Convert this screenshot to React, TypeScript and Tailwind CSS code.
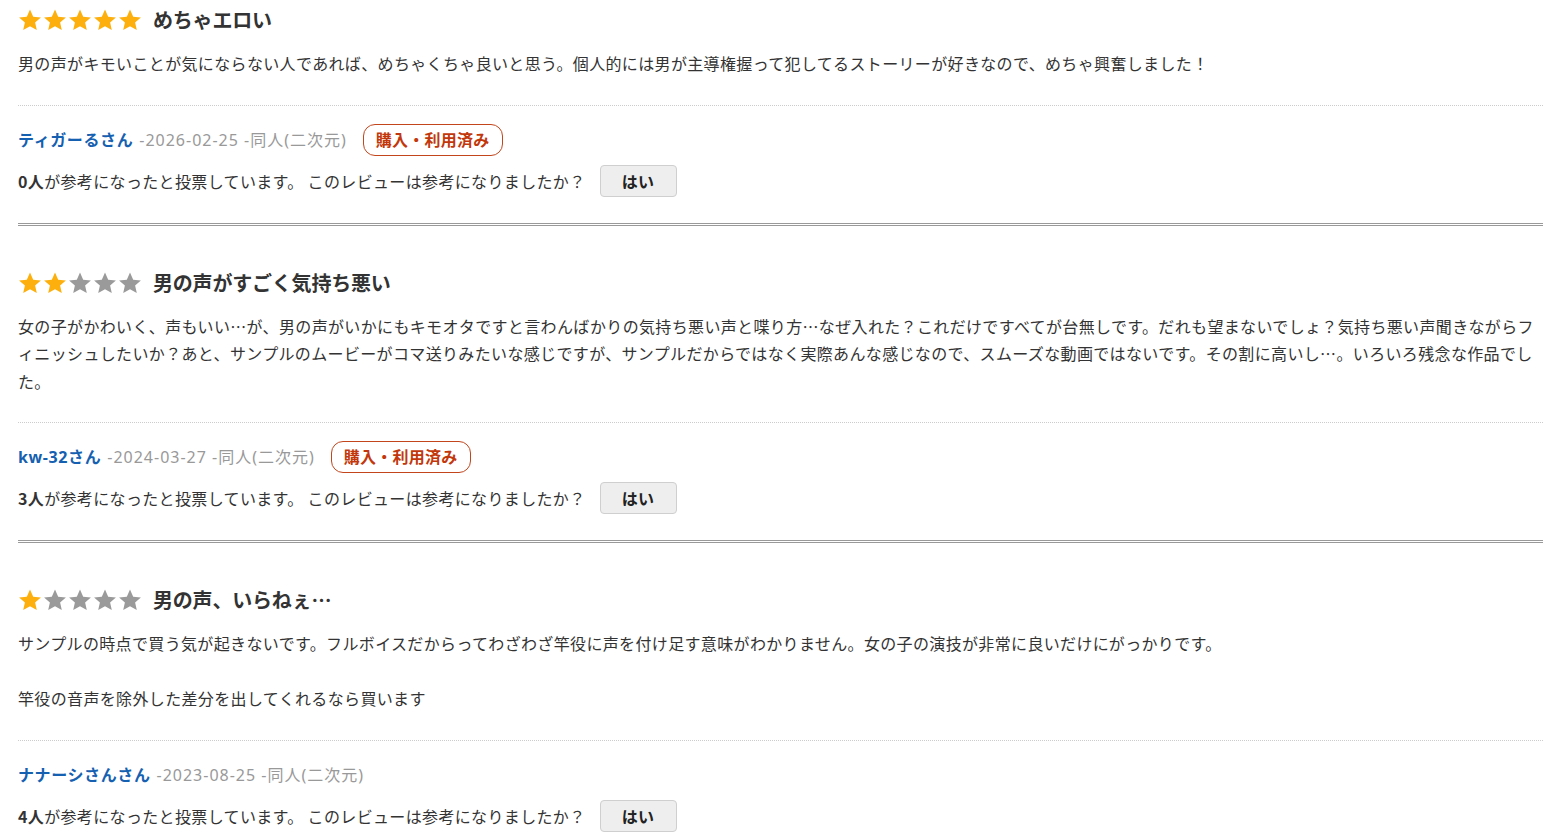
import React from 'react';

type Review = {
  stars: number;
  title: string;
  body: string[];
  name: string;
  date: string;
  purchased: boolean;
  helpful: number;
};

const reviews: Review[] = [
  {
    stars: 5,
    title: 'めちゃエロい',
    body: ['男の声がキモいことが気にならない人であれば、めちゃくちゃ良いと思う。個人的には男が主導権握って犯してるストーリーが好きなので、めちゃ興奮しました！'],
    name: 'ティガーるさん',
    date: '-2026-02-25 -同人(二次元)',
    purchased: true,
    helpful: 0,
  },
  {
    stars: 2,
    title: '男の声がすごく気持ち悪い',
    body: ['女の子がかわいく、声もいい…が、男の声がいかにもキモオタですと言わんばかりの気持ち悪い声と喋り方…なぜ入れた？これだけですべてが台無しです。だれも望まないでしょ？気持ち悪い声聞きながらフィニッシュしたいか？あと、サンプルのムービーがコマ送りみたいな感じですが、サンプルだからではなく実際あんな感じなので、スムーズな動画ではないです。その割に高いし…。いろいろ残念な作品でした。'],
    name: 'kw-32さん',
    date: '-2024-03-27 -同人(二次元)',
    purchased: true,
    helpful: 3,
  },
  {
    stars: 1,
    title: '男の声、いらねぇ…',
    body: [
      'サンプルの時点で買う気が起きないです。フルボイスだからってわざわざ竿役に声を付け足す意味がわかりません。女の子の演技が非常に良いだけにがっかりです。',
      '',
      '竿役の音声を除外した差分を出してくれるなら買います',
    ],
    name: 'ナナーシさんさん',
    date: '-2023-08-25 -同人(二次元)',
    purchased: false,
    helpful: 4,
  },
];

const Star: React.FC<{ on: boolean }> = ({ on }) => (
  <svg viewBox="0 0 24 24" className="w-[24px] h-[24px] shrink-0" aria-hidden>
    <path
      d="M12 1.6l3.2 7.1 7.7.7-5.8 5.1 1.7 7.6L12 18.2l-6.8 3.9 1.7-7.6L1.1 9.4l7.7-.7z"
      fill={on ? '#fdb00d' : '#9a9a9a'}
    />
  </svg>
);

const ReviewItem: React.FC<{ r: Review; first: boolean }> = ({ r, first }) => (
  <div className={first ? 'pt-[5px]' : 'pt-[42px]'}>
    <div className="flex items-center h-[30px]">
      <div className="flex items-center gap-[1px]">
        {[0, 1, 2, 3, 4].map((i) => (
          <Star key={i} on={i < r.stars} />
        ))}
      </div>
      <h3 className="ml-[11px] text-[20px] font-bold text-[#333] tracking-[-0.2px]">{r.title}</h3>
    </div>
    <div className="mt-[15px] text-[16px] leading-[27.5px] text-[#333] tracking-[0.35px]">
      {r.body.map((line, i) => (
        <p key={i} className="min-h-[27.5px]">{line}</p>
      ))}
    </div>
    <div className="mt-[27px] border-t border-dotted border-[#cccccc]" />
    <div
      className="mt-[18px] h-[32px] flex items-center text-[16px] tracking-[0.25px]"
      style={{ fontFamily: '"Noto Sans", "Noto Sans CJK JP", sans-serif' }}
    >
      <span className="font-bold text-[#1560b0] tracking-[0.6px]">{r.name}</span>
      <span className="ml-[6px] text-[#999] tracking-[1px]">{r.date}</span>
      {r.purchased && (
        <span className="ml-[16px] h-[32px] px-[12px] flex items-center border border-[#c2451c] rounded-[12px] text-[#c2380c] font-bold tracking-[0.25px]">
          購入・利用済み
        </span>
      )}
    </div>
    <div className="mt-[9px] h-[32px] flex items-center text-[16px] text-[#333] tracking-[0.35px]">
      <span>
        <b>{r.helpful}人</b>が参考になったと投票しています。 このレビューは参考になりましたか？
      </span>
      <button className="ml-[14px] w-[77px] h-[32px] bg-[#eeeeee] border border-[#cfcfcf] rounded-[4px] font-bold text-[#222]">
        はい
      </button>
    </div>
    <div className="mt-[26px] border-b-[3px] border-double border-[#999]" />
  </div>
);

export default function App() {
  return (
    <div
      className="min-h-screen bg-white px-[18px] pr-[17px]"
      style={{ fontFamily: '"Noto Sans CJK JP", "Noto Sans", sans-serif' }}
    >
      {reviews.map((r, i) => (
        <ReviewItem key={i} r={r} first={i === 0} />
      ))}
    </div>
  );
}
